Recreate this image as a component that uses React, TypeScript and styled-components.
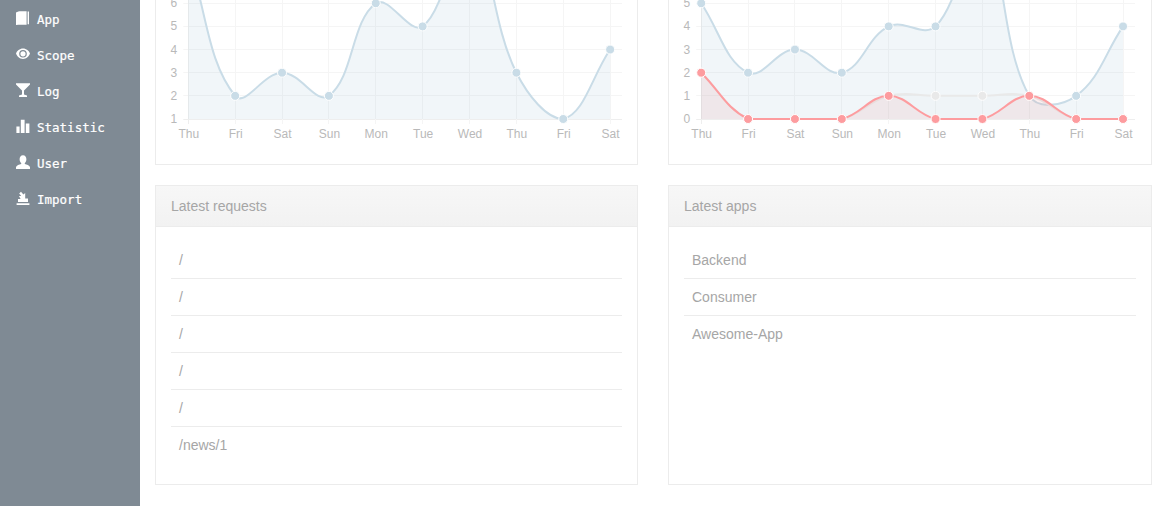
import React from "react";
import styled, { createGlobalStyle } from "styled-components";

type Point = { x: number; y: number };
type Series = {
  values: number[];
  line: string;
  fill: string;
  dot: string;
};

const DAYS = ["Thu", "Fri", "Sat", "Sun", "Mon", "Tue", "Wed", "Thu", "Fri", "Sat"];
const STEP_X = 46.87;
const STEP_Y = 23.15;
const BASE_Y = 119;

// same control point maths as chart.js 1.x, so the curves overshoot the same way
const buildPath = (pts: Point[], closeAt?: number) => {
  const tension = 0.4;
  const ctrl = pts.map((p, i) => {
    const prev = pts[i - 1] || p;
    const next = pts[i + 1] || p;
    const d01 = Math.hypot(p.x - prev.x, p.y - prev.y);
    const d12 = Math.hypot(next.x - p.x, next.y - p.y);
    const sum = d01 + d12 || 1;
    const fa = (tension * d01) / sum;
    const fb = (tension * d12) / sum;
    return {
      inX: p.x - fa * (next.x - prev.x),
      inY: Math.min(BASE_Y, p.y - fa * (next.y - prev.y)),
      outX: p.x + fb * (next.x - prev.x),
      outY: Math.min(BASE_Y, p.y + fb * (next.y - prev.y)),
    };
  });
  let d = `M${pts[0].x} ${pts[0].y}`;
  for (let i = 1; i < pts.length; i++) {
    d += ` C${ctrl[i - 1].outX} ${ctrl[i - 1].outY} ${ctrl[i].inX} ${ctrl[i].inY} ${pts[i].x} ${pts[i].y}`;
  }
  if (closeAt !== undefined) {
    d += ` L${pts[pts.length - 1].x} ${closeAt} L${pts[0].x} ${closeAt} Z`;
  }
  return d;
};

const BLUE = {
  line: "#c9dce7",
  fill: "rgba(135,172,205,0.115)",
  dot: "#c9dce7",
};
const GREY = {
  line: "#e9e9e9",
  fill: "rgba(220,220,220,0.06)",
  dot: "#e9e9e9",
};
const RED = {
  line: "#fd9c9f",
  fill: "rgba(247,70,74,0.07)",
  dot: "#fd9c9f",
};

const GlobalStyle = createGlobalStyle`
  html, body {
    margin: 0;
    padding: 0;
    background: #fff;
    overflow: hidden;
  }
  * {
    box-sizing: border-box;
  }
`;

const Page = styled.div`
  display: flex;
  width: 1170px;
  height: 506px;
  overflow: hidden;
  font-family: "Liberation Sans", Arial, sans-serif;
`;

const Sidebar = styled.nav`
  flex: 0 0 140px;
  padding-top: 1px;
  background: #7f8a94;
`;

const NavItem = styled.a`
  display: flex;
  align-items: center;
  gap: 7px;
  height: 36px;
  padding-left: 16px;
  color: #fff;
  font-family: "DejaVu Sans Mono", "Liberation Mono", monospace;
  font-size: 12.5px;
  font-weight: 400;
  -webkit-text-stroke: 0.2px #fff;
`;

const NavIcon = styled.svg`
  flex: none;
  width: 14px;
  height: 14px;
  margin-top: -3px;
  fill: #fff;
`;

const Main = styled.main`
  flex: 1;
  display: grid;
  grid-template-columns: 483px 484px;
  grid-template-rows: 165px 300px;
  gap: 20px 30px;
  padding-left: 15px;
  align-content: start;
`;

const ChartCard = styled.section`
  border: 1px solid #ececec;
  border-top: 0;
  background: #fff;
`;

const ChartSvg = styled.svg`
  display: block;
`;

const AxisLabel = styled.text`
  fill: #b9b9b9;
  font-family: "Liberation Sans", Arial, sans-serif;
  font-size: 12px;
`;

const Panel = styled.section`
  display: flex;
  flex-direction: column;
  border: 1px solid #ececec;
  background: #fff;
`;

const PanelHeading = styled.header`
  height: 41px;
  padding-left: 15px;
  border-bottom: 1px solid #ececec;
  background: linear-gradient(to bottom, #f7f7f7, #f2f2f2);
  color: #a6a6a6;
  font-size: 14px;
  line-height: 40px;
`;

const PanelList = styled.ul`
  margin: 0;
  padding: 15px;
  list-style: none;
`;

const ListRow = styled.li`
  height: 36px;
  padding-left: 8px;
  color: #a6a6a6;
  font-size: 14px;
  line-height: 36px;

  & + & {
    height: 37px;
    border-top: 1px solid #ececec;
  }
`;

const LineChart: React.FC<{
  originX: number;
  width: number;
  left: number;
  right: number;
  min: number;
  ticks: number[];
  series: Series[];
}> = ({ originX, width, left, right, min, ticks, series }) => {
  const xAt = (i: number) => left + i * STEP_X;
  const yAt = (v: number) => BASE_Y - (v - min) * STEP_Y;
  // grid lines sit on whole pixels, as they do on a canvas
  const crisp = (n: number) => Math.floor(n) + 0.5;
  return (
    <ChartSvg width={width} height={164} viewBox={`${originX} 0 ${width} 164`}>
      {ticks.map((t) => (
        <g key={t}>
          <line
            x1={left - 5}
            x2={right}
            y1={crisp(yAt(t))}
            y2={crisp(yAt(t))}
            stroke={t === min ? "#eeeeee" : "#f5f5f5"}
          />
          <AxisLabel x={left - 11} y={yAt(t) + 4} textAnchor="end">
            {t}
          </AxisLabel>
        </g>
      ))}
      {DAYS.map((day, i) => (
        <g key={i}>
          <line
            x1={crisp(xAt(i))}
            x2={crisp(xAt(i))}
            y1={0}
            y2={124}
            stroke={i === 0 ? "#eeeeee" : "#f5f5f5"}
          />
          <AxisLabel x={xAt(i) + 0.5} y={138} textAnchor="middle">
            {day}
          </AxisLabel>
        </g>
      ))}
      {series.map((s, n) => {
        const pts = s.values.map((v, i) => ({ x: xAt(i), y: yAt(v) }));
        return (
          <g key={n}>
            <path d={buildPath(pts, BASE_Y)} fill={s.fill} />
            <path d={buildPath(pts)} fill="none" stroke={s.line} strokeWidth={2} />
            {pts.map((p, i) => (
              <circle key={i} cx={p.x} cy={p.y} r={4.5} fill={s.dot} stroke="#fff" strokeWidth={1} />
            ))}
          </g>
        );
      })}
    </ChartSvg>
  );
};

const NAV: { label: string; icon: React.ReactNode }[] = [
  {
    label: "App",
    icon: (
      <path d="M0 1.4 C1.5 .6 3 .2 5 .2 H10.6 V13.8 H5 C3 13.8 1.5 14 0 14 Z M11.6 .6 H13 V13.2 H11.6 Z" />
    ),
  },
  {
    label: "Scope",
    icon: (
      <path
        fillRule="evenodd"
        d="M7 1.6 C10.4 1.6 13 4 14 6.6 C13 9.4 10.4 12 7 12 C3.6 12 1 9.4 0 6.6 C1 4 3.6 1.6 7 1.6 Z M7 3 A3.8 3.8 0 1 0 7 10.6 A3.8 3.8 0 1 0 7 3 Z M7 4.2 A2.6 2.6 0 1 1 7 9.4 A2.6 2.6 0 1 1 7 4.2 Z"
      />
    ),
  },
  {
    label: "Log",
    icon: <path d="M0 .3 H14 V1.6 L8 7.6 V11.6 L11 12.6 V14 H3 V12.6 L6 11.6 V7.6 L0 1.6 Z" />,
  },
  {
    label: "Statistic",
    icon: <path d="M.4 7.6 H3.6 V14 H.4 Z M4.8 .8 H8.6 V14 H4.8 Z M9.8 4.4 H13.4 V14 H9.8 Z" />,
  },
  {
    label: "User",
    icon: (
      <path d="M7 .2 C9.2 .2 10.4 2 10.4 4.2 C10.4 6 9.6 7.4 8.8 8 V9 C10.8 9.8 13.4 10.2 14 12 V14 H0 V12 C.6 10.2 3.2 9.8 5.2 9 V8 C4.4 7.4 3.6 6 3.6 4.2 C3.6 2 4.8 .2 7 .2 Z" />
    ),
  },
  {
    label: "Import",
    icon: (
      <path d="M.6 12.2 H13.4 V14 H.6 Z M3 5 H5.2 L3.2 2.4 L5 .8 L7.4 3.6 L9.2 2 V7.6 H12 V11 H2 V8 H4.6 Z" />
    ),
  },
];

const REQUESTS = ["/", "/", "/", "/", "/", "/news/1"];
const APPS = ["Backend", "Consumer", "Awesome-App"];

const App: React.FC = () => (
  <Page>
    <GlobalStyle />
    <Sidebar>
      {NAV.map((item) => (
        <NavItem key={item.label}>
          <NavIcon viewBox="0 0 14 14">{item.icon}</NavIcon>
          {item.label}
        </NavItem>
      ))}
    </Sidebar>
    <Main>
      <ChartCard>
        <LineChart
          originX={156}
          width={481}
          left={188.3}
          right={622}
          min={1}
          ticks={[1, 2, 3, 4, 5, 6]}
          series={[{ ...BLUE, values: [8, 2, 3, 2, 6, 5, 9, 3, 1, 4] }]}
        />
      </ChartCard>
      <ChartCard>
        <LineChart
          originX={669}
          width={482}
          left={701.2}
          right={1135}
          min={0}
          ticks={[0, 1, 2, 3, 4, 5]}
          series={[
            { ...BLUE, values: [5, 2, 3, 2, 4, 4, 8, 1, 1, 4] },
            { ...GREY, values: [2, 0, 0, 0, 1, 1, 1, 1, 0, 0] },
            { ...RED, values: [2, 0, 0, 0, 1, 0, 0, 1, 0, 0] },
          ]}
        />
      </ChartCard>
      <Panel>
        <PanelHeading>Latest requests</PanelHeading>
        <PanelList>
          {REQUESTS.map((path, i) => (
            <ListRow key={i}>{path}</ListRow>
          ))}
        </PanelList>
      </Panel>
      <Panel>
        <PanelHeading>Latest apps</PanelHeading>
        <PanelList>
          {APPS.map((name) => (
            <ListRow key={name}>{name}</ListRow>
          ))}
        </PanelList>
      </Panel>
    </Main>
  </Page>
);

export default App;
